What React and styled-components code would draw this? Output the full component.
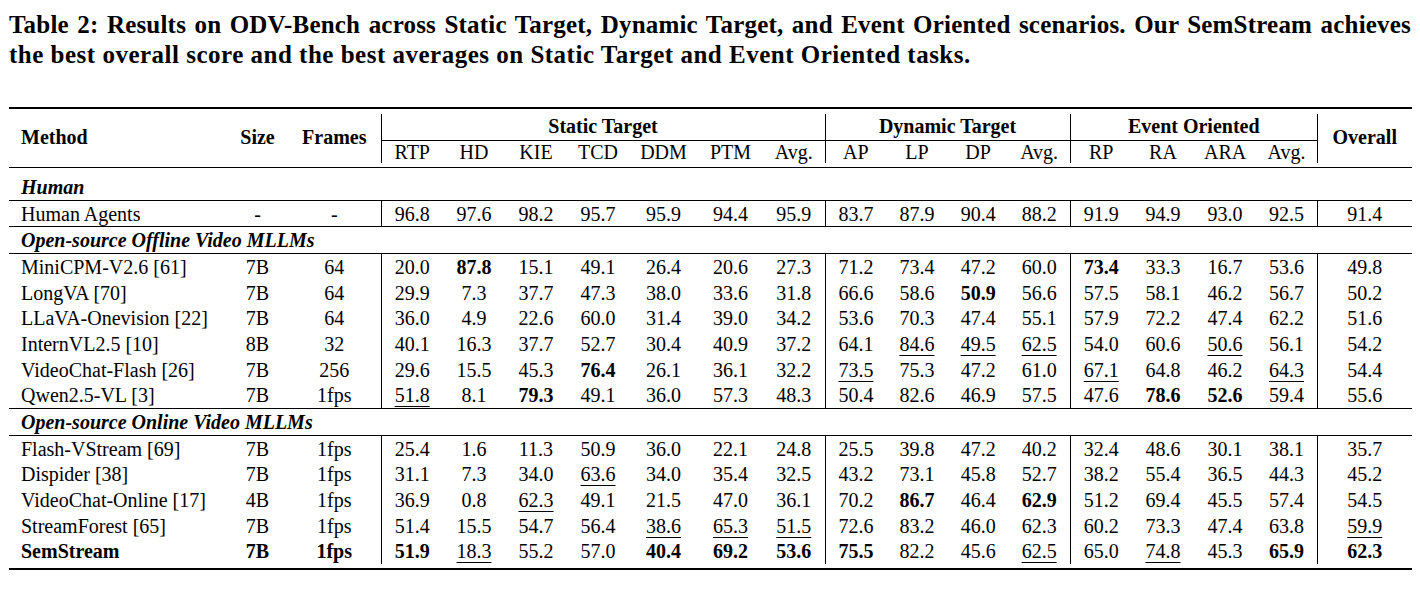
import React from "react";
import styled, { createGlobalStyle, css } from "styled-components";

const GlobalStyle = createGlobalStyle`
  body {
    margin: 8px;
    background: #fff;
    color: #000;
    font-family: "Liberation Serif", "Times New Roman", serif;
  }
`

const Page = styled.div`
  padding: 2px 1px 0;
`

const Caption = styled.div`
  width: 1402px;
  font-weight: 700;
  font-size: 25px;
  line-height: 30px;
  letter-spacing: 0.2px;
`

const CaptionLine = styled.span`
  display: block;
  text-align: left;
  letter-spacing: 0.5px;
  ${props => props.$full && css`
    text-align: justify;
    text-align-last: justify;
    letter-spacing: 0.2px;
    word-spacing: -1px;
  `}
`

const Table = styled.table`
  margin-top: 37px;
  width: 1402.5px;
  border-collapse: collapse;
  table-layout: fixed;
  font-size: 20px;
  line-height: 20px;
`

const Col = styled.col`
  width: ${props => props.$w}px;
`

const RuleRow = styled.tr`
  ${props => props.$top && css`border-top: ${props.$top}px solid #000;`}
  ${props => props.$bottom && css`border-bottom: ${props.$bottom}px solid #000;`}
`

const Spacer = styled.td`
  padding: 0;
  height: ${props => props.$h}px;
`

const HeadCell = styled.th`
  padding: 0 10px ${props => props.$lift || 0}px;
  font-weight: ${props => (props.$light ? 400 : 700)};
  text-align: ${props => (props.$left ? "left" : "center")};
  vertical-align: middle;
  white-space: nowrap;
  height: ${props => props.$h || 22}px;
  ${props => props.$left && css`padding-left: 12px;`}
  ${props => props.$sep && css`border-right: 1px solid #000;`}
  ${props => props.$cline && css`border-bottom: 1px solid #000;`}
`

const CategoryRow = styled.tr`
  border-bottom: 1px solid #000;
`

const CategoryCell = styled.td`
  padding: ${props => (props.$gap ? "6px" : "0")} 12px 0;
  height: 25.7px;
  font-weight: 700;
  font-style: italic;
  text-align: left;
  white-space: nowrap;
`

const DataRow = styled.tr`
  ${props => props.$last && css`border-bottom: 1px solid #000;`}
`

const Cell = styled.td`
  padding: 0 6px;
  height: 25.7px;
  text-align: ${props => (props.$left ? "left" : "center")};
  font-weight: ${props => (props.$strong ? 700 : 400)};
  white-space: nowrap;
  ${props => props.$left && css`padding-left: 12px;`}
  ${props => props.$sep && css`border-right: 1px solid #000;`}
`

const Score = styled.span`
  font-weight: ${props => (props.$bold ? 700 : "inherit")};
  ${props => props.$under && css`
    text-decoration: underline;
    text-decoration-thickness: 1px;
    text-underline-offset: 4px;
  `}
`

const widths = [218, 61, 93, 62, 62, 62, 62, 69, 65, 62, 61.25, 61.25, 61.25, 61.25, 62, 62, 62, 61.5, 94]
const sepAfter = [2, 9, 13, 17]

const groups = [
  { name: "Static Target", cols: ["RTP", "HD", "KIE", "TCD", "DDM", "PTM", "Avg."] },
  { name: "Dynamic Target", cols: ["AP", "LP", "DP", "Avg."] },
  { name: "Event Oriented", cols: ["RP", "RA", "ARA", "Avg."] },
]

// * = best (bold), _ = second best (underline)
const sections = [
  {
    title: "Human",
    rows: [
      ["Human Agents", "-", "-", "96.8 97.6 98.2 95.7 95.9 94.4 95.9 83.7 87.9 90.4 88.2 91.9 94.9 93.0 92.5 91.4"],
    ],
  },
  {
    title: "Open-source Offline Video MLLMs",
    rows: [
      ["MiniCPM-V2.6 [61]", "7B", "64", "20.0 *87.8 15.1 49.1 26.4 20.6 27.3 71.2 73.4 47.2 60.0 *73.4 33.3 16.7 53.6 49.8"],
      ["LongVA [70]", "7B", "64", "29.9 7.3 37.7 47.3 38.0 33.6 31.8 66.6 58.6 *50.9 56.6 57.5 58.1 46.2 56.7 50.2"],
      ["LLaVA-Onevision [22]", "7B", "64", "36.0 4.9 22.6 60.0 31.4 39.0 34.2 53.6 70.3 47.4 55.1 57.9 72.2 47.4 62.2 51.6"],
      ["InternVL2.5 [10]", "8B", "32", "40.1 16.3 37.7 52.7 30.4 40.9 37.2 64.1 _84.6 _49.5 _62.5 54.0 60.6 _50.6 56.1 54.2"],
      ["VideoChat-Flash [26]", "7B", "256", "29.6 15.5 45.3 *76.4 26.1 36.1 32.2 _73.5 75.3 47.2 61.0 _67.1 64.8 46.2 _64.3 54.4"],
      ["Qwen2.5-VL [3]", "7B", "1fps", "_51.8 8.1 *79.3 49.1 36.0 57.3 48.3 50.4 82.6 46.9 57.5 47.6 *78.6 *52.6 59.4 55.6"],
    ],
  },
  {
    title: "Open-source Online Video MLLMs",
    rows: [
      ["Flash-VStream [69]", "7B", "1fps", "25.4 1.6 11.3 50.9 36.0 22.1 24.8 25.5 39.8 47.2 40.2 32.4 48.6 30.1 38.1 35.7"],
      ["Dispider [38]", "7B", "1fps", "31.1 7.3 34.0 _63.6 34.0 35.4 32.5 43.2 73.1 45.8 52.7 38.2 55.4 36.5 44.3 45.2"],
      ["VideoChat-Online [17]", "4B", "1fps", "36.9 0.8 _62.3 49.1 21.5 47.0 36.1 70.2 *86.7 46.4 *62.9 51.2 69.4 45.5 57.4 54.5"],
      ["StreamForest [65]", "7B", "1fps", "51.4 15.5 54.7 56.4 _38.6 _65.3 _51.5 72.6 83.2 46.0 62.3 60.2 73.3 47.4 63.8 _59.9"],
      ["SemStream", "7B", "1fps", "*51.9 _18.3 55.2 57.0 *40.4 *69.2 *53.6 *75.5 82.2 45.6 _62.5 65.0 _74.8 45.3 *65.9 *62.3", true],
    ],
  },
]

function ScoreText({ raw }) {
  const bold = raw[0] === "*"
  const under = raw[0] === "_"
  const value = bold || under ? raw.slice(1) : raw
  return <Score $bold={bold} $under={under}>{value}</Score>
}

function Section({ section, index, isLastSection }) {
  return (
    <>
      <CategoryRow>
        <CategoryCell colSpan={19} $gap={index === 0}>{section.title}</CategoryCell>
      </CategoryRow>
      {section.rows.map((row, i) => {
        const [method, size, frames, scores, strong] = row
        const cells = [size, frames, ...scores.split(" ")]
        const lastRow = i === section.rows.length - 1
        return (
          <DataRow key={method} $last={lastRow && !isLastSection}>
            <Cell $left $strong={strong}>{method}</Cell>
            {cells.map((c, j) => (
              <Cell key={j} $strong={strong && j < 2} $sep={sepAfter.includes(j + 1)}>
                <ScoreText raw={c} />
              </Cell>
            ))}
          </DataRow>
        )
      })}
    </>
  )
}

export default function App() {
  return (
    <Page>
      <GlobalStyle />
      <Caption>
        <CaptionLine $full>
          Table 2: Results on ODV-Bench across Static Target, Dynamic Target, and Event Oriented scenarios. Our SemStream achieves
        </CaptionLine>
        <CaptionLine>
          the best overall score and the best averages on Static Target and Event Oriented tasks.
        </CaptionLine>
      </Caption>

      <Table>
        <colgroup>
          {widths.map((w, i) => <Col key={i} $w={w} />)}
        </colgroup>
        <thead>
          <RuleRow $top={2}>
            <Spacer colSpan={19} $h={5} />
          </RuleRow>
          <tr>
            <HeadCell rowSpan={2} $left $lift={3}>Method</HeadCell>
            <HeadCell rowSpan={2} $lift={3}>Size</HeadCell>
            <HeadCell rowSpan={2} $lift={3} $sep>Frames</HeadCell>
            {groups.map(g => (
              <HeadCell key={g.name} colSpan={g.cols.length} $h={23} $lift={3} $sep $cline>{g.name}</HeadCell>
            ))}
            <HeadCell rowSpan={2} $lift={3}>Overall</HeadCell>
          </tr>
          <tr>
            {groups.map(g => g.cols.map((c, i) => (
              <HeadCell key={g.name + c} $light $sep={i === g.cols.length - 1}>{c}</HeadCell>
            )))}
          </tr>
          <RuleRow $bottom={1}>
            <Spacer colSpan={19} $h={4} />
          </RuleRow>
        </thead>
        <tbody>
          {sections.map((s, i) => (
            <Section key={s.title} section={s} index={i} isLastSection={i === sections.length - 1} />
          ))}
          <RuleRow $bottom={2}>
            <Spacer colSpan={19} $h={4} />
          </RuleRow>
        </tbody>
      </Table>
    </Page>
  )
}
